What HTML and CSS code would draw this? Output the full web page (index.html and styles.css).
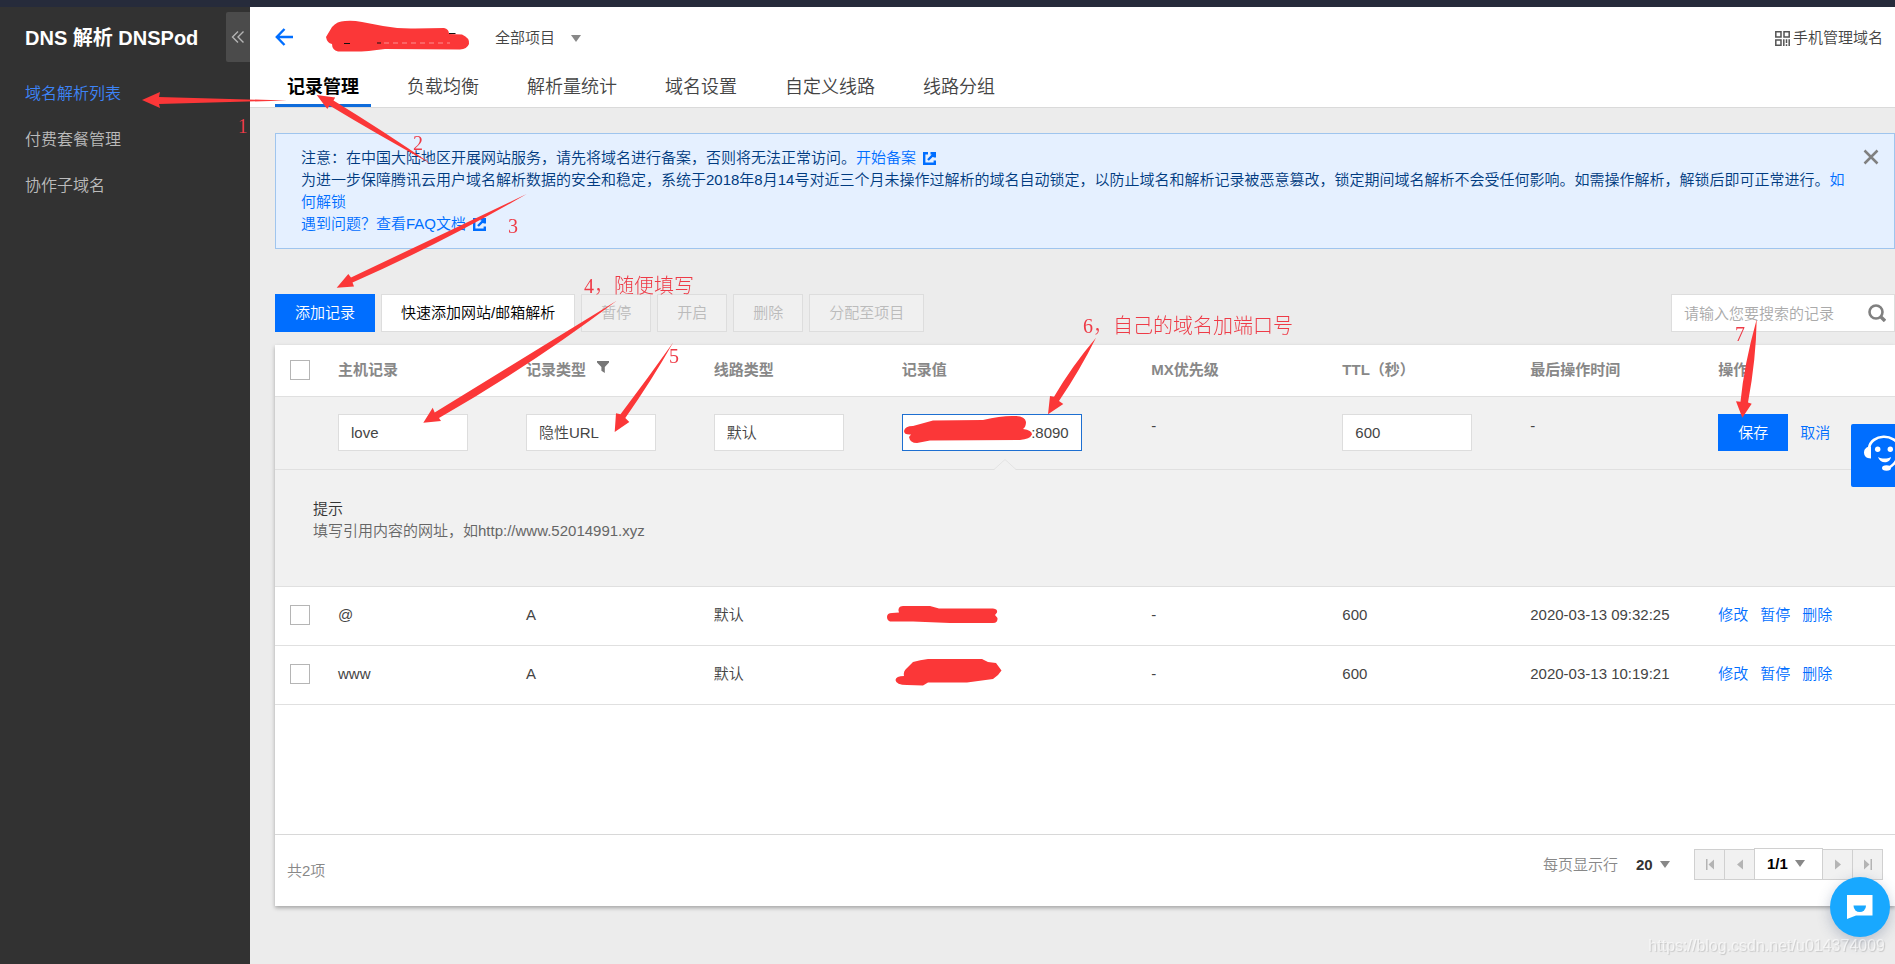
FILE: index.html
```html
<!DOCTYPE html>
<html lang="zh-CN">
<head>
<meta charset="utf-8">
<title>DNS 解析 DNSPod</title>
<link rel="stylesheet" href="styles.css">
</head>
<body>
<div class="topbar"></div>
<div class="shell">
  <aside class="sidebar">
    <div class="sidebar-head">
      <h1 class="sidebar-title">DNS 解析 DNSPod</h1>
      <button class="collapse" type="button" aria-label="收起菜单">
        <svg width="14" height="14" viewBox="0 0 14 14" fill="none" stroke="#b4b4b4" stroke-width="1.4"><path d="M7 1.5 1.500 7 7 12.500M12.500 1.500 7 7l5.500 5.500"/></svg>
      </button>
    </div>
    <nav class="menu">
      <a class="menu-item active" href="#">域名解析列表</a>
      <a class="menu-item" href="#">付费套餐管理</a>
      <a class="menu-item" href="#">协作子域名</a>
    </nav>
  </aside>

  <main class="main">
    <header class="header">
      <div class="header-row">
        <a class="back" href="#" aria-label="返回">
          <svg width="18" height="18" viewBox="0 0 18 18" fill="none" stroke="#006eff" stroke-width="2.4"><path d="M9.500 1 1.800 9l7.700 8M2 9h16"/></svg>
        </a>
        <label class="picker project">
          <select class="bare-select project-select" aria-label="项目"><option>全部项目</option></select>
          <svg width="10" height="7" viewBox="0 0 10 7"><path d="M0 0h10L5 7z" fill="#888"/></svg>
        </label>
        <a class="mobile" href="#">
          <svg width="15" height="15" viewBox="0 0 15 15" fill="none" stroke="#555" stroke-width="1.5"><path d="M.8.8h5.200V6H.8zM9 .8h5.200V6H9zM.8 9h5.200v5.200H.8zM8.800 8.200V15M11.500 8.200V12M14.200 8.200V15M11.500 13.200V15"/></svg>
          手机管理域名
        </a>
      </div>
      <nav class="tabs">
        <a class="tab active" href="#">记录管理</a>
        <a class="tab" href="#">负载均衡</a>
        <a class="tab" href="#">解析量统计</a>
        <a class="tab" href="#">域名设置</a>
        <a class="tab" href="#">自定义线路</a>
        <a class="tab" href="#">线路分组</a>
      </nav>
    </header>

    <div class="content">
      <section class="notice">
        <div class="notice-text">
          <p>注意：在中国大陆地区开展网站服务，请先将域名进行备案，否则将无法正常访问。<a href="#">开始备案<svg class="ext" width="13" height="13" viewBox="0 0 13 13" fill="none" stroke="#006eff" stroke-width="2.4"><path d="M5 1.200H1.200v10.600h10.600V8.500M7.500 1.200h4.300v4.300M11.800 1.200 5 8"/></svg></a></p>
          <p>为进一步保障腾讯云用户域名解析数据的安全和稳定，系统于2018年8月14号对近三个月未操作过解析的域名自动锁定，以防止域名和解析记录被恶意篡改，锁定期间域名解析不会受任何影响。如需操作解析，解锁后即可正常进行。<a href="#">如何解锁</a></p>
          <p><a href="#">遇到问题？查看FAQ文档<svg class="ext" width="13" height="13" viewBox="0 0 13 13" fill="none" stroke="#006eff" stroke-width="2.4"><path d="M5 1.200H1.200v10.600h10.600V8.500M7.500 1.200h4.300v4.300M11.800 1.200 5 8"/></svg></a></p>
        </div>
        <button class="close" type="button" aria-label="关闭">
          <svg width="16" height="16" viewBox="0 0 16 16" stroke="#808080" stroke-width="2.5"><path d="m1.500 1.500 13 13M14.500 1.500l-13 13"/></svg>
        </button>
      </section>

      <div class="toolbar">
        <button class="btn primary" type="button">添加记录</button>
        <button class="btn" type="button">快速添加网站/邮箱解析</button>
        <button class="btn" type="button" disabled>暂停</button>
        <button class="btn" type="button" disabled>开启</button>
        <button class="btn" type="button" disabled>删除</button>
        <button class="btn" type="button" disabled>分配至项目</button>
        <form class="search">
          <input class="search-input" type="text" placeholder="请输入您要搜索的记录" aria-label="搜索记录">
          <button class="search-btn" type="button" aria-label="搜索">
            <svg width="18" height="18" viewBox="0 0 18 18" fill="none" stroke="#808080" stroke-width="2.6"><circle cx="8" cy="8" r="6.500"/><path d="m12.500 12.500 4.500 4.500" stroke-width="3.4"/></svg>
          </button>
        </form>
      </div>

      <section class="card">
        <table class="records">
          <colgroup>
            <col class="c-check"><col class="c-std"><col class="c-std"><col class="c-std"><col class="c-value"><col class="c-mx"><col class="c-std"><col class="c-std"><col>
          </colgroup>
          <thead>
            <tr>
              <th class="check"><input class="box" type="checkbox" aria-label="全选"></th>
              <th>主机记录</th>
              <th>记录类型<svg class="filter" width="12" height="12" viewBox="0 0 12 12"><path d="M0 0h12v1.500L7.800 6v6L4.400 9.800V6L0 1.500z" fill="#777"/></svg></th>
              <th>线路类型</th>
              <th>记录值</th>
              <th>MX优先级</th>
              <th>TTL（秒）</th>
              <th>最后操作时间</th>
              <th>操作</th>
            </tr>
          </thead>
          <tbody>
            <tr class="edit">
              <td></td>
              <td><input class="field" type="text" value="love" aria-label="主机记录"></td>
              <td><select class="field" aria-label="记录类型"><option>隐性URL</option></select></td>
              <td><select class="field" aria-label="线路类型"><option>默认</option></select></td>
              <td class="value-cell">
                <input class="field value-field" type="text" value=":8090" aria-label="记录值">
                <svg class="pointer" width="22" height="11" viewBox="0 0 22 11"><path d="M0 11 11 1l11 10z" fill="#f1f1f1"/><path d="M0 10.500 11 .500l11 10" fill="none" stroke="#e3e3e3"/></svg>
              </td>
              <td class="dash">-</td>
              <td><input class="field" type="text" value="600" aria-label="TTL"></td>
              <td class="dash">-</td>
              <td>
                <div class="actions">
                  <button class="save" type="button">保存</button>
                  <a href="#">取消</a>
                </div>
              </td>
            </tr>
            <tr class="hint">
              <td colspan="9">
                <p class="hint-title">提示</p>
                <p>填写引用内容的网址，如http://www.52014991.xyz</p>
              </td>
            </tr>
            <tr class="row">
              <td class="check"><input class="box" type="checkbox" aria-label="选择 @"></td>
              <td>@</td><td>A</td><td>默认</td><td></td><td>-</td><td>600</td>
              <td>2020-03-13 09:32:25</td>
              <td><div class="actions"><a href="#">修改</a><a href="#">暂停</a><a href="#">删除</a></div></td>
            </tr>
            <tr class="row">
              <td class="check"><input class="box" type="checkbox" aria-label="选择 www"></td>
              <td>www</td><td>A</td><td>默认</td><td></td><td>-</td><td>600</td>
              <td>2020-03-13 10:19:21</td>
              <td><div class="actions"><a href="#">修改</a><a href="#">暂停</a><a href="#">删除</a></div></td>
            </tr>
          </tbody>
        </table>
        <footer class="card-foot">
          <span class="total">共2项</span>
          <label class="picker page-size">
            <span>每页显示行</span>
            <select class="bare-select size-select"><option>20</option></select>
            <svg width="10" height="7" viewBox="0 0 10 7"><path d="M0 0h10L5 7z" fill="#888"/></svg>
          </label>
          <div class="pager">
            <button class="page-btn" type="button" aria-label="第一页" disabled><svg width="8" height="11" viewBox="0 0 8 11" fill="#b4b4b4"><path d="M0 0h1.500v11H0zM8 .5v10L2.500 5.500z"/></svg></button>
            <button class="page-btn" type="button" aria-label="上一页" disabled><svg width="8" height="11" viewBox="0 0 8 11" fill="#b4b4b4"><path d="M7 .5v10L1 5.500z"/></svg></button>
            <label class="picker page-current">
              <select class="bare-select page-select" aria-label="页码"><option>1/1</option></select>
              <svg width="10" height="7" viewBox="0 0 10 7"><path d="M0 0h10L5 7z" fill="#888"/></svg>
            </label>
            <button class="page-btn" type="button" aria-label="下一页" disabled><svg width="8" height="11" viewBox="0 0 8 11" fill="#b4b4b4"><path d="M1 .5v10l6-5z"/></svg></button>
            <button class="page-btn" type="button" aria-label="最后一页" disabled><svg width="8" height="11" viewBox="0 0 8 11" fill="#b4b4b4"><path d="M6.500 0H8v11H6.500zM0 .5v10l5.500-5z"/></svg></button>
          </div>
        </footer>
      </section>
    </div>
  </main>
</div>

<button class="service" type="button" aria-label="在线客服">
  <svg width="44" height="63" viewBox="0 0 44 63" fill="#fff">
    <path d="M18 24C20 10 44 8 49 24M46 34c-1 5-5 8-9 10" fill="none" stroke="#fff" stroke-width="2.6"/>
    <path d="M20 22.500v12c-5 0-7-3-7-6s2-6 7-6z"/>
    <circle cx="26.700" cy="25.300" r="2.700"/><circle cx="39.300" cy="25.300" r="2.700"/>
    <path d="M27 33c4 2 9 2 13 0-1 7-11 7-13 0z"/>
    <ellipse cx="35.500" cy="44" rx="4.500" ry="2.700"/>
  </svg>
</button>
<button class="chat" type="button" aria-label="聊天">
  <svg width="26" height="24" viewBox="0 0 26 24"><path d="M0 0h25.500v20.500H9L0 24z" fill="#fff"/><path d="M6.500 10.500h12.500a6.200 6.500 0 0 1-12.500 0z" fill="#18a8ff"/></svg>
</button>
<span class="watermark">https://blog.csdn.net/u014374009</span>

<div class="marks">
  <svg class="ink" width="1895" height="964" viewBox="0 0 1895 964" fill="#fb3738">
    <path d="M326 37 332 27Q337 21 345 21 352 20 362 22L383 26Q400 29 415 28.500L444 28Q449 29 449 34L462 34.500Q470 38 469 44 467 49 460 49.500L385 49Q365 52 350 51.500L338 51.500Q332 50 332 44 327 43 326 37z"/>
    <path d="M449 33.500h6.500M344 43.500h6M377 43h4" stroke="#111"/>
    <path d="M384 43h66" stroke="#fcc" stroke-width=".6" stroke-dasharray="5 4"/>
    <path d="M904 431Q905 426 913 426L933 420.500 983 420Q1000 416 1012 416 1025 415 1026 422 1026 427 1023 429 1032 430 1032 434.500 1030 439 1020 440L930 440.500 917 443Q910 443 909 437L911 434.500Q904 435 904 431z"/>
    <path d="M887 617Q887 613 892 613L899 612.500Q897 606 903 606H930L939 608.500H993Q998 609 997 612.500L995 615 997.500 618Q998 623 993 623H950L913 621.500H890Q887 620 887 617z"/>
    <path d="M895.500 680Q896 676 904 676 903 671 907 668L913 662Q920 660 928 659H982L988 662 996 663 1001.500 670.500 998 675 993 679 967 682.500H928L923 685.500 907 685Q896 685 895.500 680z"/>
    <path d="m142 100 18-8-1 5 128 3.500L159 104l1 4z"/>
    <path d="m316.700 95 18.500 2.500-1.700 3Q385 132 432 164.500 375 133 329.500 105.500l-2.200 3.500z"/>
    <path d="m336.700 287.700 11.600-13.700 2.700 3.500Q430 240 526.700 194 440 244 352.500 282.500l1.500 4z"/>
    <path d="m423.300 422.700 9.400-15 2 4.800Q520 360 616.700 300.700 530 366 439 418l2 3z"/>
    <path d="M614.700 432 616 413.300l4.500 1Q648 378 673.300 342.300 652 380 625.300 418l4 4z"/>
    <path d="m1048 414.300 2-18.300 4 .7Q1072 366 1096 337.700 1080 370 1059 401l4.300 3z"/>
    <path d="M1742.300 417.700 1736 401.300l4.500.500Q1744 365 1756.700 319.300 1756 360 1748 402.500l3.700 1.200z"/>
  </svg>
  <span class="mark m1">1</span>
  <span class="mark m2">2</span>
  <span class="mark m3">3</span>
  <span class="mark m4">4，随便填写</span>
  <span class="mark m5">5</span>
  <span class="mark m6">6，自己的域名加端口号</span>
  <span class="mark m7">7</span>
</div>
</body>
</html>
```
FILE: styles.css
```css
* { box-sizing: border-box; }

body {
  margin: 0;
  min-height: 100vh;
  display: flex;
  flex-direction: column;
  position: relative;
  overflow-x: hidden;
  background: #ececec;
  color: #444;
  font: 15px/22px "Liberation Sans", "Noto Sans CJK SC", sans-serif;
  font-weight: 350;
}

a { color: #006eff; text-decoration: none; }
p, h1 { margin: 0; }
svg { display: block; }

button, input, select {
  font: inherit;
  color: inherit;
  margin: 0;
  border-radius: 0;
}

.topbar { height: 7px; background: #262b3b; }
.shell { flex: 1; display: flex; }

/* Sidebar */
.sidebar { width: 250px; flex: none; background: #323232; }
.sidebar-head {
  display: flex;
  align-items: flex-start;
  justify-content: space-between;
  padding: 5px 0 0 25px;
}
.sidebar-title { font-size: 20px; line-height: 52px; color: #fff; white-space: nowrap; }
.collapse {
  width: 24px;
  height: 50px;
  padding: 0;
  border: 0;
  border-radius: 2px 0 0 2px;
  background: #4b4b4b;
  display: grid;
  place-items: center;
}
.menu { display: flex; flex-direction: column; padding-top: 7px; }
.menu-item { padding-left: 25px; font-size: 16px; line-height: 46px; color: #bbb; }
.menu-item.active { color: #3d84f7; }

/* Header */
.main { flex: 1; min-width: 0; display: flex; flex-direction: column; }
.header {
  height: 101px;
  display: flex;
  flex-direction: column;
  justify-content: space-between;
  padding: 0 12px 0 25px;
  background: #fff;
  border-bottom: 1px solid #dadada;
}
.header-row { display: flex; align-items: center; height: 60px; }
.project { margin-left: 202px; padding-top: 2px; }
.mobile { margin-left: auto; display: flex; align-items: center; gap: 3px; padding-top: 2px; color: #444; }
.tabs { display: flex; gap: 24px; }
.tab { padding: 0 12px; font-size: 18px; line-height: 34px; color: #444; border-bottom: 3px solid transparent; }
.tab.active { color: #000; font-weight: bold; border-color: #0e6cdb; }

.picker { display: flex; align-items: center; }
.bare-select { appearance: none; border: 0; padding: 0; background: transparent; }
.project-select { width: 76px; }

/* Notice */
.content { padding: 25px 0 0 25px; }
.notice {
  display: flex;
  align-items: flex-start;
  gap: 15px;
  padding: 13px 15px 13px 25px;
  background: #e5f0ff;
  border: 1px solid #9fc5ee;
  color: #003b80;
}
.notice-text { flex: 1; }
.ext { display: inline-block; margin-left: 7px; vertical-align: -2px; }
.close { border: 0; padding: 2px 0; background: none; }

/* Toolbar */
.toolbar { display: flex; align-items: center; gap: 6px; margin: 45px 0 13px; }
.btn {
  height: 38px;
  padding: 0 19px;
  border: 1px solid #ddd;
  background: #fff;
  color: #000;
}
.btn.primary { background: #006eff; border-color: #006eff; color: #fff; }
.btn:disabled { background: #f0f0f0; color: #bbb; }
.search {
  display: flex;
  align-items: center;
  width: 224px;
  height: 38px;
  margin-left: auto;
  background: #fff;
  border: 1px solid #ddd;
}
.search-input { flex: 1; min-width: 0; height: 36px; border: 0; padding: 0 0 0 12px; background: none; outline: 0; }
.search-input::placeholder { color: #aaa; }
.search-btn { border: 0; padding: 0 8px; background: none; }

/* Records */
.card { background: #fff; box-shadow: 0 2px 4px rgba(0, 0, 0, 0.3); }
.records { width: 100%; table-layout: fixed; border-collapse: collapse; }
.c-check { width: 50px; }
.c-std { width: 11.6%; }
.c-value { width: 15.4%; }
.c-mx { width: 11.8%; }
.records th, .records td {
  padding: 0 0 0 13px;
  text-align: left;
  border-bottom: 1px solid #e0e0e0;
}
.records th { height: 51px; color: #888; font-weight: bold; }
.records .check { padding-left: 15px; }
.box {
  appearance: none;
  display: block;
  width: 20px;
  height: 20px;
  border: 1px solid #b5b5b5;
  background: #fff;
}
.filter { display: inline-block; margin-left: 11px; vertical-align: 2px; }
.edit, .hint { background: #f1f1f1; }
.edit td { height: 73px; }
.records .dash { vertical-align: top; padding-top: 18px; }
.field {
  appearance: none;
  display: block;
  width: 130px;
  height: 37px;
  padding: 0 12px;
  border: 1px solid #ddd;
  background: #fff;
}
.value-cell { position: relative; }
.value-field { width: 180px; padding-right: 12px; border-color: #1d6fd1; text-align: right; }
.pointer { position: absolute; left: 105px; bottom: -1px; }
.actions { display: flex; align-items: center; gap: 12px; }
.save { width: 70px; height: 37px; border: 0; padding: 0; background: #006eff; color: #fff; }
.records .hint td { padding: 28px 38px 44px; color: #666; }
.hint-title { color: #333; }
.records .row td { height: 59px; padding-bottom: 2px; }

.card-foot {
  display: flex;
  align-items: flex-start;
  margin-top: 129px;
  padding: 13px 12px 24px 12px;
  border-top: 1px solid #d8d8d8;
  color: #888;
}
.total { padding-top: 12px; }
.page-size { margin-left: auto; padding-top: 6px; }
.size-select { width: 18px; margin-left: 18px; font-weight: bold; color: #333; }
.pager { display: flex; align-items: flex-end; margin-left: 24px; }
.page-btn {
  width: 31px;
  height: 31px;
  margin-right: -1px;
  padding: 0;
  border: 1px solid #d0d0d0;
  background: #f1f1f1;
  display: grid;
  place-items: center;
}
.page-btn:last-child { margin-right: 0; }
.page-current { width: 69px; height: 32px; margin-right: -1px; padding-left: 12px; border: 1px solid #d0d0d0; background: #fff; }
.page-select { width: 28px; font-weight: bold; color: #000; }
.page-size svg { margin-left: 6px; }

/* Floating widgets */
.service {
  position: fixed;
  top: 424px;
  right: 0;
  width: 44px;
  height: 63px;
  padding: 0;
  border: 0;
  border-radius: 2px 0 0 2px;
  background: #006eff;
  overflow: hidden;
}
.chat {
  position: fixed;
  right: 5px;
  bottom: 27px;
  width: 60px;
  height: 60px;
  padding: 0;
  border: 0;
  border-radius: 50%;
  background: #18a8ff;
  box-shadow: 0 4px 14px rgba(60, 80, 120, 0.3);
  display: grid;
  place-items: center;
}
.watermark {
  position: fixed;
  right: 10px;
  bottom: 7px;
  font-size: 16px;
  color: rgba(255, 255, 255, 0.6);
  text-shadow: 1px 1px 1px rgba(0, 0, 0, 0.15);
}

/* Hand-drawn annotations laid over the page */
.marks { position: absolute; top: 0; left: 0; pointer-events: none; }
.mark {
  position: absolute;
  font: 20px/24px "Liberation Serif", "Noto Sans CJK SC", serif;
  font-weight: 300;
  color: #ee3b47;
  white-space: nowrap;
}
.m1 { left: 238px; top: 114px; }
.m2 { left: 413px; top: 131px; }
.m3 { left: 508px; top: 214px; }
.m4 { left: 584px; top: 274px; }
.m5 { left: 669px; top: 344px; }
.m6 { left: 1083px; top: 314px; }
.m7 { left: 1735px; top: 322px; }
```
